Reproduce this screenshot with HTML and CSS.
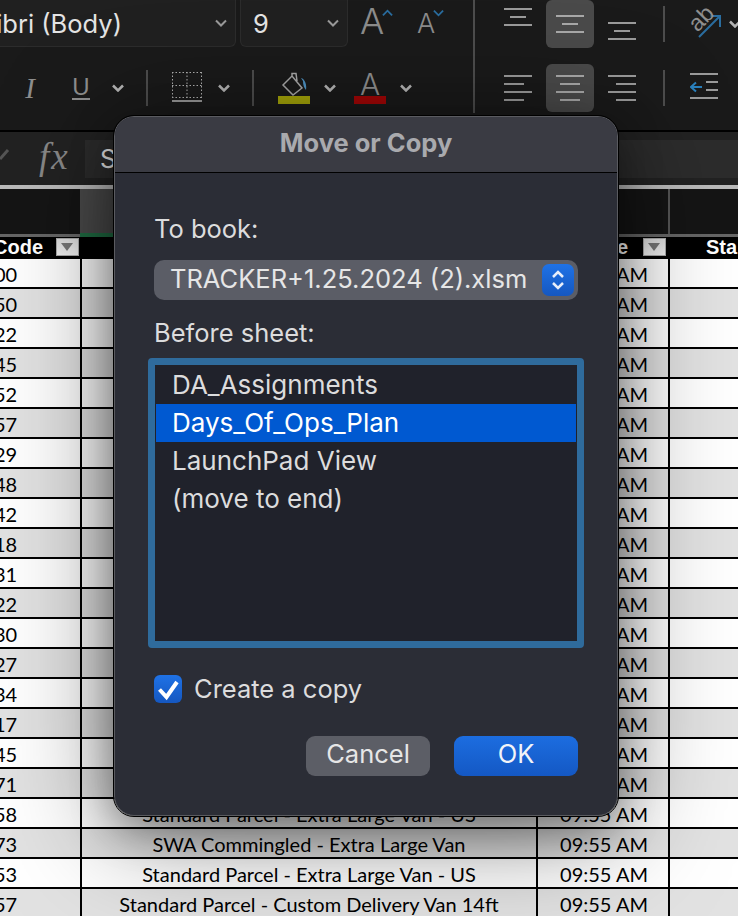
FILE: index.html
```html
<!DOCTYPE html>
<html lang="en">
<head>
    <meta charset="UTF-8">
    <title>Move or Copy</title>
    <link rel="stylesheet" href="styles.css">
</head>
<body>

    <!-- ribbon -->
    <div class="ribbon">
        <div class="fontGroup">
            <div class="fontRow">
                <div class="combo fontName"><span>libri (Body)</span><svg class="chev" viewBox="0 0 12 8"><path d="M1 1.500 6 6.500 11 1.500"/></svg></div>
                <div class="combo fontSize"><span>9</span><svg class="chev" viewBox="0 0 12 8"><path d="M1 1.500 6 6.500 11 1.500"/></svg></div>
                <div class="growA"><span>A</span><svg viewBox="0 0 12 8"><path d="M1 6.500 6 1.500 11 6.500"/></svg></div>
                <div class="shrinkA"><span>A</span><svg viewBox="0 0 12 8"><path d="M1 1.500 6 6.500 11 1.500"/></svg></div>
            </div>
            <div class="styleRow">
                <span class="italic">I</span>
                <span class="underline">U</span>
                <svg class="chev brightChev" viewBox="0 0 12 8"><path d="M1 1.500 6 6.500 11 1.500"/></svg>
                <div class="vsep"></div>
                <svg class="borders" viewBox="0 0 30 30"><path class="dots" d="M0 .5H30M0 25.500H30M.5 0V26M29.500 0V26M15 0V26M0 13.500H30"/><path class="solid" d="M0 29H30"/></svg>
                <svg class="chev brightChev" viewBox="0 0 12 8"><path d="M1 1.500 6 6.500 11 1.500"/></svg>
                <div class="vsep"></div>
                <div class="fill">
                    <svg viewBox="0 0 32 24"><path class="bucket" d="M5 13 14 4 24 16 15 23ZM14 4V1.500H18L19 9"/><path class="drop" d="M23 6C27 7 29 13 28 18 26 16 25 13 25 9Z"/></svg>
                    <div class="swatch yellow"></div>
                </div>
                <svg class="chev brightChev" viewBox="0 0 12 8"><path d="M1 1.500 6 6.500 11 1.500"/></svg>
                <div class="colorA"><span>A</span><div class="swatch red"></div></div>
                <svg class="chev brightChev" viewBox="0 0 12 8"><path d="M1 1.500 6 6.500 11 1.500"/></svg>
            </div>
        </div>
        <div class="vsep tall"></div>
        <div class="alignGroup">
            <div class="alignBtn top"><i class="l28"></i><i class="l16"></i><i class="l28"></i></div>
            <div class="alignBtn on"><i class="l28"></i><i class="l16"></i><i class="l28"></i></div>
            <div class="alignBtn bottom"><i class="l28"></i><i class="l16"></i><i class="l28"></i></div>
            <div class="alignBtn left"><i class="l28"></i><i class="l20"></i><i class="l28"></i><i class="l20"></i></div>
            <div class="alignBtn on"><i class="l28"></i><i class="l20"></i><i class="l28"></i><i class="l20"></i></div>
            <div class="alignBtn right"><i class="l28"></i><i class="l20"></i><i class="l28"></i><i class="l20"></i></div>
        </div>
        <div class="lastGroup">
            <div class="lastRow">
                <div class="vsep short"></div>
                <div class="orient">
                    <span>ab</span>
                    <svg viewBox="0 0 34 34"><path d="M12 29 33 8M23.500 8H33V19"/></svg>
                </div>
                <svg class="chev brightChev cutChev" viewBox="0 0 12 8"><path d="M1 1.500 6 6.500 11 1.500"/></svg>
            </div>
            <div class="lastRow">
                <div class="vsep short"></div>
                <svg class="indent" viewBox="0 0 28 28"><path class="lines" d="M0 1H28M16 9H28M16 17H28M0 25H28"/><path class="arrow" d="M1 14H12M6 9.500 1 14 6 18.500"/></svg>
            </div>
        </div>
    </div>

    <!-- formula bar -->
    <div class="formulaBar">
        <svg class="tick" viewBox="0 0 10 12"><path d="M0 11 8 2"/></svg>
        <span class="fx">fx</span>
        <div class="formulaInput">S</div>
    </div>

    <!-- column letters strip -->
    <div class="colStrip">
        <div class="stripA"></div>
        <div class="stripB"></div>
        <div class="stripC"></div>
        <div class="stripD"></div>
    </div>

    <!-- sheet -->
    <table class="sheet">
        <tr class="head">
            <th class="colA">Code<b class="filter"></b></th>
            <th class="colB"></th>
            <th class="colC">e<b class="filter"></b></th>
            <th class="colD">Sta</th>
        </tr>
        <tr><td>00</td><td></td><td>AM</td><td></td></tr>
        <tr><td>50</td><td></td><td>AM</td><td></td></tr>
        <tr><td>22</td><td></td><td>AM</td><td></td></tr>
        <tr><td>45</td><td></td><td>AM</td><td></td></tr>
        <tr><td>52</td><td></td><td>AM</td><td></td></tr>
        <tr><td>57</td><td></td><td>AM</td><td></td></tr>
        <tr><td>29</td><td></td><td>AM</td><td></td></tr>
        <tr><td>48</td><td></td><td>AM</td><td></td></tr>
        <tr><td>42</td><td></td><td>AM</td><td></td></tr>
        <tr><td>18</td><td></td><td>AM</td><td></td></tr>
        <tr><td>31</td><td></td><td>AM</td><td></td></tr>
        <tr><td>22</td><td></td><td>AM</td><td></td></tr>
        <tr><td>30</td><td></td><td>AM</td><td></td></tr>
        <tr><td>27</td><td></td><td>AM</td><td></td></tr>
        <tr><td>34</td><td></td><td>AM</td><td></td></tr>
        <tr><td>17</td><td></td><td>AM</td><td></td></tr>
        <tr><td>45</td><td></td><td>AM</td><td></td></tr>
        <tr><td>71</td><td></td><td>AM</td><td></td></tr>
        <tr><td>58</td><td>Standard Parcel - Extra Large Van - US</td><td>09:55 AM</td><td></td></tr>
        <tr><td>73</td><td>SWA Commingled - Extra Large Van</td><td>09:55 AM</td><td></td></tr>
        <tr><td>53</td><td>Standard Parcel - Extra Large Van - US</td><td>09:55 AM</td><td></td></tr>
        <tr><td>57</td><td>Standard Parcel - Custom Delivery Van 14ft</td><td>09:55 AM</td><td></td></tr>
    </table>

    <!-- the dialog -->
    <div class="dialog">
        <div class="titleBar">Move or Copy</div>
        <div class="dialogBody">
            <label class="fieldLabel">To book:</label>
            <div class="popup">
                <span>TRACKER+1.25.2024 (2).xlsm</span>
                <div class="stepper">
                    <svg viewBox="0 0 14 22"><path d="M2 8 7 3 12 8M2 14 7 19 12 14"/></svg>
                </div>
            </div>
            <label class="fieldLabel second">Before sheet:</label>
            <div class="listBox">
                <div class="listItem">DA_Assignments</div>
                <div class="listItem selected">Days_Of_Ops_Plan</div>
                <div class="listItem">LaunchPad View</div>
                <div class="listItem">(move to end)</div>
            </div>
            <div class="checkRow">
                <div class="checkBox"><svg viewBox="0 0 28 28"><path d="M5.500 14.500 12.500 22 23 7"/></svg></div>
                <span>Create a copy</span>
            </div>
            <div class="buttons">
                <button class="btn">Cancel</button>
                <button class="btn primary">OK</button>
            </div>
        </div>
    </div>

</body>
</html>
```

FILE: styles.css
```css
body {
    margin: 0;
    width: 738px;
    height: 916px;
    overflow: hidden;
    background: #fff;
    font-family: "Inter", "Liberation Sans", sans-serif;
    position: relative;
}

/* ribbon */
.ribbon {
    height: 130px;
    background: #1a1a1a;
    display: flex;
    border-bottom: 2px solid #000;
}
.fontGroup {
    width: 473px;
    flex: none;
    overflow: hidden;
}
.fontRow {
    display: flex;
    height: 48px;
    margin-left: -23px;
}
.combo {
    height: 47px;
    box-sizing: border-box;
    background: #202020;
    border: 1px solid #2c2c2c;
    border-top: 0;
    border-radius: 0 0 6px 6px;
    display: flex;
    align-items: center;
    justify-content: space-between;
    color: #e4e4e4;
    font-size: 25.500px;
    padding: 0 8px 0 12px;
}
.fontName {
    width: 259px;
}
.fontSize {
    width: 108px;
    margin-left: 4px;
}
.chev {
    width: 12px;
    height: 8px;
    flex: none;
    fill: none;
    stroke: #9a9a9a;
    stroke-width: 2;
}
.brightChev {
    stroke: #b4b4b4;
    stroke-width: 2.500;
}
.growA, .shrinkA {
    display: flex;
    color: #8c8c8c;
    font-weight: 300;
}
.growA svg, .shrinkA svg {
    width: 11px;
    height: 8px;
    fill: none;
    stroke-width: 2;
    stroke: #2a6d9f;
    margin-top: 9px;
    margin-left: -2px;
}
.growA {
    margin-left: 12px;
    width: 57px;
    font-size: 36px;
    line-height: 42px;
}
.shrinkA {
    font-size: 27px;
    line-height: 48px;
}
.styleRow {
    height: 48px;
    margin-top: 16px;
    display: flex;
    align-items: center;
    color: #8e8e8e;
}
.italic {
    font-family: "Liberation Serif", serif;
    font-style: italic;
    font-size: 29px;
    margin-left: 18px;
    width: 24px;
    text-align: center;
}
.underline {
    font-family: "Liberation Sans", sans-serif;
    font-size: 24px;
    line-height: 22px;
    border-bottom: 2px solid #8e8e8e;
    margin-left: 30px;
    width: 18px;
    text-align: center;
}
.underline + .chev {
    margin-left: 22px;
}
.vsep {
    width: 2px;
    height: 36px;
    flex: none;
    background: #4d4d4d;
    margin-left: 22px;
}
.borders {
    width: 30px;
    height: 30px;
    margin-left: 24px;
    margin-top: -2px;
    fill: none;
}
.borders .dots {
    stroke: #b0b0b0;
    stroke-dasharray: 1.500 2;
}
.borders .solid {
    stroke: #999;
    stroke-width: 2;
}
.borders + .chev {
    margin-left: 16px;
}
.fill {
    width: 32px;
    margin-left: 24px;
}
.fill svg {
    display: block;
    width: 32px;
    height: 24px;
}
.bucket {
    fill: none;
    stroke: #a8a8a8;
    stroke-width: 1.500;
}
.drop {
    fill: #4f93c4;
}
.swatch {
    height: 8px;
}
.yellow {
    background: #a5a50a;
}
.red {
    background: #a30606;
}
.fill + .chev {
    margin-left: 14px;
}
.colorA {
    width: 32px;
    margin-left: 18px;
    text-align: center;
    font-size: 30px;
    font-weight: 300;
    line-height: 24px;
}
.colorA span {
    display: block;
    height: 24px;
}
.colorA + .chev {
    margin-left: 14px;
}
.tall {
    height: 113px;
    margin-left: 0;
}
.alignGroup {
    display: grid;
    grid-template-columns: repeat(3, 48px);
    column-gap: 4px;
    row-gap: 16px;
    margin-left: 19px;
    grid-auto-rows: 48px;
    width: 152px;
    flex: none;
}
.alignBtn {
    border-radius: 6px;
    display: flex;
    flex-direction: column;
    gap: 6px;
    align-items: center;
    justify-content: center;
}
.alignBtn.on {
    background: #4a4a4a;
}
.alignBtn i {
    display: block;
    height: 2px;
    background: #9a9a9a;
}
.alignBtn.on i {
    background: #a8a8a8;
}
.l28 { width: 28px; }
.l20 { width: 20px; }
.l16 { width: 16px; }
.alignBtn.top {
    justify-content: flex-start;
    padding-top: 8px;
}
.alignBtn.bottom {
    justify-content: flex-end;
    padding-bottom: 8px;
}
.alignBtn.left {
    align-items: flex-start;
    padding-left: 10px;
}
.alignBtn.right {
    align-items: flex-end;
    padding-right: 10px;
}
.lastGroup {
    flex: 1;
    margin-left: 17px;
}
.lastRow {
    height: 64px;
    display: flex;
    align-items: flex-start;
}
.lastRow .short {
    margin-left: 0;
    margin-top: 6px;
}
.orient {
    position: relative;
    width: 34px;
    height: 34px;
    margin-left: 22px;
    margin-top: 8px;
}
.orient span {
    position: absolute;
    left: 1px;
    top: -2px;
    color: #8e8e8e;
    font-size: 23px;
    line-height: 24px;
    transform: rotate(-45deg);
    font-family: "Liberation Sans", sans-serif;
}
.orient svg {
    display: block;
    width: 34px;
    height: 34px;
    fill: none;
    stroke: #2a6d9f;
    stroke-width: 2;
}
.cutChev {
    margin: 20px 0 0 8px;
}
.indent {
    width: 28px;
    height: 28px;
    margin-left: 25px;
    margin-top: 9px;
    fill: none;
    stroke-width: 2;
}
.indent .lines {
    stroke: #9a9a9a;
}
.indent .arrow {
    stroke: #2a80bd;
}

/* formula bar */
.formulaBar {
    height: 53px;
    background: #222;
    display: flex;
    align-items: flex-start;
}
.tick {
    width: 10px;
    height: 12px;
    margin-top: 16px;
    flex: none;
    fill: none;
    stroke: #555;
    stroke-width: 3;
}
.fx {
    font-family: "Liberation Serif", serif;
    font-style: italic;
    font-size: 37px;
    letter-spacing: 2px;
    color: #888;
    margin-left: 29px;
    width: 46px;
    line-height: 50px;
    flex: none;
}
.formulaInput {
    flex: 1;
    height: 38px;
    margin-top: 8px;
    background: #2c2c2c;
    color: #e8e8e8;
    font-size: 25.500px;
    line-height: 38px;
    padding-left: 15px;
}

/* column strip */
.colStrip {
    height: 45px;
    background: #151515;
    border-top: 4px solid #bbb;
    border-bottom: 3px solid #666;
    display: flex;
}
.stripA { width: 80px; }
.stripB { width: 456px; background: #4a4a4a; border-bottom: 4px solid #1f6b42; margin-bottom: -3px; }
.stripC { width: 132px; border-right: 2px solid #555; }
.stripD { flex: 1; }

/* sheet */
.sheet {
    border-collapse: separate;
    border-spacing: 0;
    table-layout: fixed;
    width: 738px;
    font-family: "Lato", "Liberation Sans", sans-serif;
    font-size: 20px;
    color: #000;
}
.sheet tr {
    height: 30px;
}
.sheet tr.head {
    height: 22px;
}
.sheet td {
    padding: 3px 0 0;
    text-align: center;
    border-right: 2px solid #000;
    border-bottom: 2px solid #000;
    white-space: nowrap;
    overflow: hidden;
    background: #fff;
    line-height: 25px;
}
.sheet tr:nth-child(odd) td {
    background: #e2e2e2;
}
.sheet td:first-child {
    text-align: left;
    text-indent: -6px;
}
.sheet td:nth-child(3) {
    text-align: right;
    padding-right: 20px;
}
.sheet td:last-child {
    border-right: 0;
}
.head th {
    box-sizing: border-box;
    background: #000;
    color: #fff;
    padding: 0;
    font-family: "Liberation Sans", sans-serif;
    font-size: 20px;
    line-height: 20px;
    white-space: nowrap;
    overflow: hidden;
    text-align: left;
    vertical-align: top;
}
.colA { width: 82px; text-indent: -7px; }
.colB { width: 456px; }
.colC { width: 132px; }
.head .colC { text-align: right; padding-right: 4px; }
.head .colD { padding-left: 36px; }
.filter {
    display: inline-block;
    width: 23px;
    height: 18px;
    box-sizing: border-box;
    background: linear-gradient(#ddd, #f2f2f2);
    border: 1px solid #aaa;
    margin-left: 13px;
    margin-top: 1px;
    vertical-align: top;
    position: relative;
    text-indent: 0;
}
.colC .filter {
    margin-left: 15px;
}
.filter::after {
    content: "";
    position: absolute;
    left: 4px;
    top: 4px;
    border: 6px solid transparent;
    border-top: 8px solid #777;
    border-bottom: 0;
}

/* dialog */
.dialog {
    position: absolute;
    left: 114px;
    top: 116px;
    width: 504px;
    height: 700px;
    box-sizing: border-box;
    background: #2b2d36;
    border: 1px solid #5a5b60;
    outline: 1px solid #000;
    border-radius: 20px;
    box-shadow: 0 12px 40px rgba(0, 0, 0, .35), 0 16px 110px rgba(0, 0, 0, .5);
    overflow: hidden;
    color: #dcdcdd;
}
.titleBar {
    height: 55px;
    background: #3a3b43;
    border-bottom: 1px solid #000;
    text-align: center;
    font-weight: 700;
    font-size: 25.500px;
    line-height: 51px;
    color: #a9aaae;
}
.dialogBody {
    padding: 0 39px;
}
.fieldLabel {
    display: block;
    font-size: 25.500px;
    line-height: 28px;
    padding-top: 42px;
}
.fieldLabel.second {
    padding-top: 19px;
}
.popup {
    margin-top: 17px;
    height: 40px;
    border-radius: 10px;
    background: #5b5d66;
    display: flex;
    align-items: center;
    justify-content: space-between;
    font-size: 25.500px;
    padding: 0 4px 0 16px;
    color: #e6e6e6;
}
.popup span {
    padding-bottom: 3px;
}
.stepper {
    width: 32px;
    height: 32px;
    border-radius: 7px;
    background: linear-gradient(#1f72e6, #1557c0);
    display: flex;
    align-items: center;
    justify-content: center;
}
.stepper svg {
    width: 14px;
    height: 22px;
    fill: none;
    stroke: #e8eefa;
    stroke-width: 2.500;
}
.listBox {
    margin: 11px -6px 0;
    height: 290px;
    border: 7px solid #2f6b9c;
    border-radius: 4px;
    background: #20222b;
    padding: 1px;
    box-sizing: border-box;
}
.listItem {
    height: 38px;
    padding-left: 16px;
    font-size: 26px;
    line-height: 38px;
}
.listItem.selected {
    background: #0059d1;
    color: #fff;
}
.checkRow {
    display: flex;
    align-items: center;
    gap: 12px;
    margin-top: 26px;
    font-size: 25.500px;
    line-height: 30px;
}
.checkBox {
    width: 28px;
    height: 28px;
    border-radius: 6px;
    background: linear-gradient(#1f72e6, #1557c0);
}
.checkBox svg {
    display: block;
    fill: none;
    stroke: #fff;
    stroke-width: 4;
}
.buttons {
    display: flex;
    justify-content: flex-end;
    gap: 24px;
    margin-top: 32px;
}
.btn {
    width: 124px;
    height: 40px;
    border: 0;
    border-radius: 9px;
    background: #5c5e66;
    color: #e6e6e6;
    font-family: inherit;
    font-size: 25.500px;
    padding: 0 0 5px;
}
.btn.primary {
    background: linear-gradient(#1c6de0, #1458c4);
    color: #f2f4f8;
}
```
